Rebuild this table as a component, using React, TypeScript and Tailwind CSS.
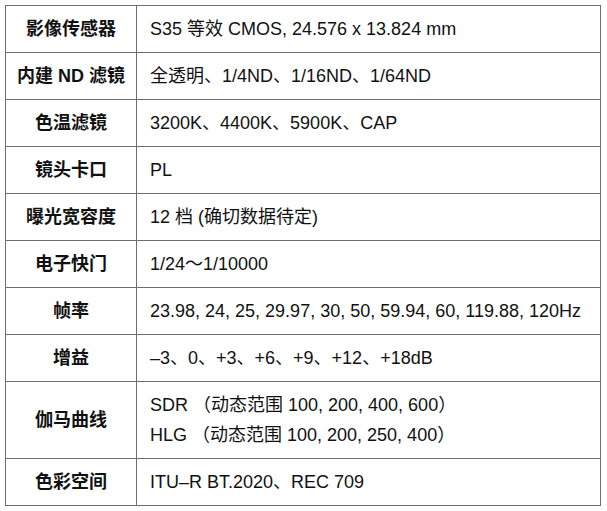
import React from 'react';

const rows: { label: string; values: string[] }[] = [
  { label: '影像传感器', values: ['S35 等效 CMOS, 24.576 x 13.824 mm'] },
  { label: '内建 ND 滤镜', values: ['全透明、1/4ND、1/16ND、1/64ND'] },
  { label: '色温滤镜', values: ['3200K、4400K、5900K、CAP'] },
  { label: '镜头卡口', values: ['PL'] },
  { label: '曝光宽容度', values: ['12 档 (确切数据待定)'] },
  { label: '电子快门', values: ['1/24～1/10000'] },
  { label: '帧率', values: ['23.98, 24, 25, 29.97, 30, 50, 59.94, 60, 119.88, 120Hz'] },
  { label: '增益', values: ['–3、0、+3、+6、+9、+12、+18dB'] },
  {
    label: '伽马曲线',
    values: ['SDR （动态范围 100, 200, 400, 600）', 'HLG （动态范围 100, 200, 250, 400）'],
  },
  { label: '色彩空间', values: ['ITU–R BT.2020、REC 709'] },
];

export default function App() {
  return (
    <div
      className="w-[607px] h-[511px] bg-white pt-[5px] pl-[5px] text-[#111] text-[18px] leading-[30px]"
      style={{ fontFamily: '"Liberation Sans", "Noto Sans CJK SC", sans-serif' }}
    >
      <table className="w-[596px] border-collapse table-fixed">
        <colgroup>
          <col className="w-[131px]" />
          <col />
        </colgroup>
        <tbody>
          {rows.map((row) => (
            <tr key={row.label}>
              <td className="border border-[#6e6e6e] text-center font-bold py-[8px] align-middle">
                {row.label}
              </td>
              <td className="border border-[#6e6e6e] pl-[13px] py-[8px] align-middle whitespace-nowrap">
                {row.values.map((v) => (
                  <div key={v}>{v}</div>
                ))}
              </td>
            </tr>
          ))}
        </tbody>
      </table>
    </div>
  );
}
